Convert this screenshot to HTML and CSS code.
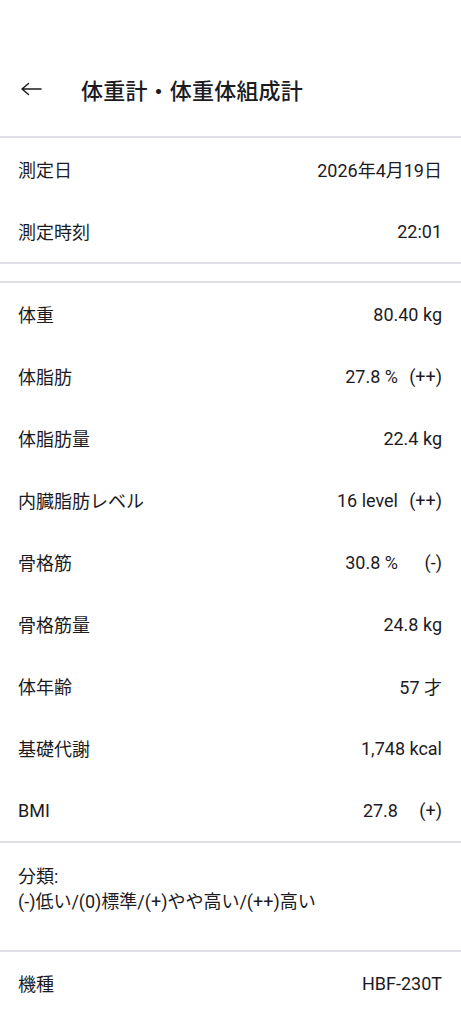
FILE: index.html
```html
<!DOCTYPE html>
<html lang="ja">
<head>
  <meta charset="UTF-8" />
  <title>体重計・体重体組成計</title>
  <link rel="stylesheet" href="styles.css">
</head>
<body>
  <header class="appbar">
    <button class="back" aria-label="戻る">
      <svg width="24" height="16" viewBox="0 0 24 16">
        <path d="M22 8H3M9.5 2.5L3 8l6.5 5.5" fill="none" stroke="#1c1b1f" stroke-width="1.5" stroke-linecap="round" stroke-linejoin="round"/>
      </svg>
    </button>
    <h1>体重計・体重体組成計</h1>
  </header>

  <section class="group">
    <div class="row"><span class="label">測定日</span><span class="value">2026年4月19日</span></div>
    <div class="row"><span class="label">測定時刻</span><span class="value">22:01</span></div>
  </section>

  <div class="spacer"></div>

  <section class="group">
    <div class="row"><span class="label">体重</span><span class="value">80.40 kg</span></div>
    <div class="row"><span class="label">体脂肪</span><span class="value">27.8 %<span class="grade">(++)</span></span></div>
    <div class="row"><span class="label">体脂肪量</span><span class="value">22.4 kg</span></div>
    <div class="row"><span class="label">内臓脂肪レベル</span><span class="value">16 level<span class="grade">(++)</span></span></div>
    <div class="row"><span class="label">骨格筋</span><span class="value">30.8 %<span class="grade">(-)</span></span></div>
    <div class="row"><span class="label">骨格筋量</span><span class="value">24.8 kg</span></div>
    <div class="row"><span class="label">体年齢</span><span class="value">57 才</span></div>
    <div class="row"><span class="label">基礎代謝</span><span class="value">1,748 kcal</span></div>
    <div class="row"><span class="label">BMI</span><span class="value">27.8<span class="grade">(+)</span></span></div>
  </section>

  <section class="group note">
    <p>分類:<br>(-)低い/(0)標準/(+)やや高い/(++)高い</p>
  </section>

  <section class="group">
    <div class="row"><span class="label">機種</span><span class="value">HBF-230T</span></div>
  </section>
</body>
</html>
```

FILE: styles.css
```css
body {
  margin: 0;
  background: #ffffff;
  color: #1c1b1f;
  font-family: Roboto, "Noto Sans CJK JP", sans-serif;
  font-size: 18px;
}
.appbar {
  display: flex;
  align-items: center;
  height: 62px;
  padding: 58px 0 16px 0;
}
.back {
  width: 62px;
  height: 62px;
  padding: 0 0 0 19px;
  margin: 0 19px 0 0;
  border: none;
  background: none;
  display: flex;
  align-items: center;
}
.appbar h1 {
  margin: 0;
  font-size: 22px;
  font-weight: 500;
  letter-spacing: 0.2px;
}
.group {
  border-top: 2px solid #e0dee5;
}
.group:last-child {
  border-bottom: none;
}
.spacer {
  height: 17px;
  border-top: 2px solid #e0dee5;
}
.spacer + .group {
  border-top: 2px solid #e0dee5;
}
.row {
  display: flex;
  align-items: center;
  justify-content: space-between;
  height: 62px;
  padding: 0 19px 0 18px;
}
.grade {
  display: inline-block;
  min-width: 44px;
  text-align: right;
}
.note p {
  margin: 0;
  padding: 21px 18px 36px;
  line-height: 25px;
}
```
